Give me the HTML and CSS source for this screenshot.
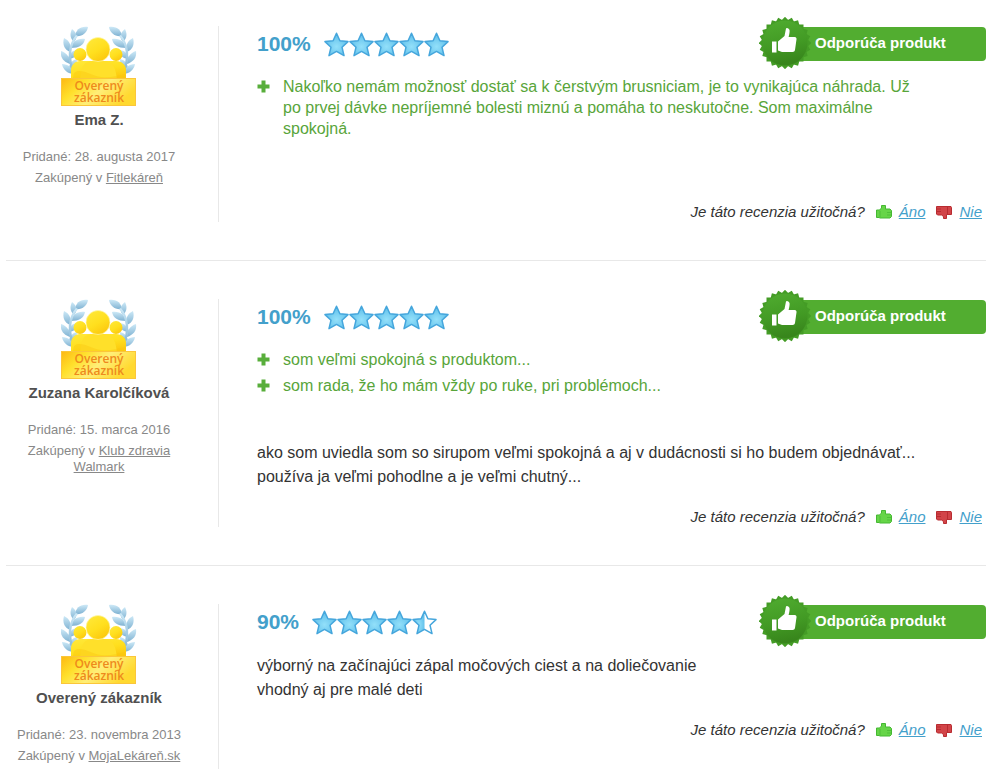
FILE: index.html
```html
<!DOCTYPE html>
<html lang="sk">
<head>
    <meta charset="UTF-8">
    <meta name="viewport" content="width=device-width, initial-scale=1.0">
    <title>Recenzie produktu</title>
    <link rel="stylesheet" href="styles.css">
</head>
<body>
    <!-- shared icons -->
    <svg class="sprite" aria-hidden="true">
        <defs>
            <linearGradient id="gold" x1="0" y1="0" x2="0.6" y2="1">
                <stop offset="0" stop-color="#ffe93c"/>
                <stop offset="0.6" stop-color="#ffdf1e"/>
                <stop offset="1" stop-color="#fcc90f"/>
            </linearGradient>
            <linearGradient id="plate" x1="0" y1="0" x2="1" y2="0.4">
                <stop offset="0" stop-color="#fdb813"/>
                <stop offset="0.3" stop-color="#ffe02c"/>
                <stop offset="0.6" stop-color="#ffee78"/>
                <stop offset="1" stop-color="#ffd930"/>
            </linearGradient>
            <linearGradient id="leaf" x1="0" y1="0" x2="0" y2="1">
                <stop offset="0" stop-color="#cde9f7"/>
                <stop offset="1" stop-color="#7fb2d2"/>
            </linearGradient>
            <radialGradient id="starFill" cx="0.5" cy="0.6" r="0.55">
                <stop offset="0" stop-color="#93e0fa"/>
                <stop offset="1" stop-color="#5fbfea"/>
            </radialGradient>
            <linearGradient id="sealFill" x1="0" y1="0" x2="0.2" y2="1">
                <stop offset="0" stop-color="#50ac30"/>
                <stop offset="0.6" stop-color="#429a24"/>
                <stop offset="1" stop-color="#38861c"/>
            </linearGradient>
        </defs>
        <symbol id="star" viewBox="0 0 25 25">
            <path d="M12.5 1.2 15.9 8.8 24 9.6 18 15.2 20 23.6 12.5 19.4 5 23.6 7 15.2 1 9.6 9.1 8.8Z" fill="url(#starFill)" stroke="#45a6dc" stroke-width="1.5" stroke-linejoin="round"/>
        </symbol>
        <symbol id="star-half" viewBox="0 0 25 25">
            <path d="M12.5 1.2 15.9 8.8 24 9.6 18 15.2 20 23.6 12.5 19.4 5 23.6 7 15.2 1 9.6 9.1 8.8Z" fill="#fff"/>
            <path d="M12.5 1.2V19.4L5 23.6 7 15.2 1 9.6 9.1 8.8Z" fill="url(#starFill)"/>
            <path d="M12.5 1.2 15.9 8.8 24 9.6 18 15.2 20 23.6 12.5 19.4 5 23.6 7 15.2 1 9.6 9.1 8.8Z" fill="none" stroke="#45a6dc" stroke-width="1.5" stroke-linejoin="round"/>
        </symbol>
        <symbol id="plus" viewBox="0 0 13 13">
            <path d="M4.5 0.5h4v4h4v4h-4v4h-4v-4h-4v-4h4z" fill="#58ae3b"/>
        </symbol>
        <symbol id="vote-up" viewBox="0 0 16 16">
            <path d="M0.5 6h3l2-2V1.500h4V5h4.500l1.500 1.500v6L14 14H4l-1-.5H0.500z" fill="#66d548" stroke="#45b832"/>
            <path d="M4 7v6M11 8.500h4M11 11h4" fill="none" stroke="#4fbf39"/>
        </symbol>
        <symbol id="vote-down" viewBox="0 0 16 16">
            <path d="M0.500 2.500H15l.5 1v7h-5v4h-3v-2L5.500 11h-4l-1-1z" fill="#d24448" stroke="#b82c31"/>
            <path d="M11.500 3v7M1 5h4M1 7.500h4" fill="none" stroke="#b82c31"/>
        </symbol>
        <symbol id="seal" viewBox="0 0 52 52">
            <g fill="#449c26">
                <rect x="7.500" y="7.500" width="37" height="37"/>
                <rect x="7.500" y="7.500" width="37" height="37" transform="rotate(15 26 26)"/>
                <rect x="7.500" y="7.500" width="37" height="37" transform="rotate(30 26 26)"/>
                <rect x="7.500" y="7.500" width="37" height="37" transform="rotate(45 26 26)"/>
                <rect x="7.500" y="7.500" width="37" height="37" transform="rotate(60 26 26)"/>
                <rect x="7.500" y="7.500" width="37" height="37" transform="rotate(75 26 26)"/>
            </g>
            <circle cx="26" cy="26" r="22.500" fill="url(#sealFill)"/>
            <path d="M13 24.500h4.500V35.500H13z" fill="#fff"/>
            <path d="M19 24.500 25.500 19 27 11.500c.3-1.200 3.400-.6 3.600 2 .1 2-.5 4.500-1 6.500h6c1.700 0 2.300 1.500 1.800 3L36 33c-.3 1.300-1 2-2.400 2H23l-4-1.500z" fill="#fff"/>
        </symbol>
        <symbol id="verified" viewBox="0 0 76 82">
            <g id="laurel" fill="url(#leaf)">
                <path d="M27 1c-8-1-12 3-13 9 7 1 12-3 13-9z"/>
                <path d="M11 3c-3 6-1 10 2 13 4-5 3-9-2-13z"/>
                <path d="M24 13c-8-1-13 3-14 9 8 0 13-3 14-9z"/>
                <path d="M3 12c-2 7 1 12 6 14 2-6 0-11-6-14z"/>
                <path d="M17 24c-6 0-9 4-10 9 6 0 10-4 10-9z"/>
                <path d="M0 25c-1 7 3 11 9 13 0-7-3-11-9-13z"/>
                <path d="M16 33c-5 1-8 5-8 10 6-1 8-5 8-10z"/>
                <path d="M1 38c1 6 6 10 12 10-1-6-6-10-12-10z"/>
                <path d="M15 9C7 18 5 32 12 48l2-1C8 33 9 19 17 10z"/>
            </g>
            <use href="#laurel" transform="matrix(-1 0 0 1 75 0)"/>
            <circle cx="19" cy="28.500" r="6.500" fill="url(#gold)"/>
            <circle cx="55" cy="28.500" r="6.500" fill="url(#gold)"/>
            <path d="M10 54V44c0-5 4-9 9-9h36c6 0 10 4 10 9v10z" fill="url(#gold)"/>
            <path d="M19 54c1-10 2-18 11-19h14c9 1 11 9 12 19z" fill="#ffe02a"/>
            <circle cx="37" cy="23.500" r="12" fill="url(#gold)" stroke="#fff6a8" stroke-width="0.700"/>
            <path d="M12 53c0-6 2-8 6-8 8 0 14 5 22 6 9 1 15-1 24-3v5z" fill="#fbc60e" opacity="0.400"/>
            <rect x="0.500" y="52.500" width="74" height="27" fill="url(#plate)" stroke="#fbc63a"/>
        </symbol>
    </svg>

    <main class="reviews">
        <article class="review">
            <div class="author">
                <div class="verified">
                    <svg><use href="#verified"/></svg>
                    <span>Overený<br>zákazník</span>
                </div>
                <h3>Ema Z.</h3>
                <p>Pridané: 28. augusta 2017</p>
                <p>Zakúpený v <a href="#">Fitlekáreň</a></p>
            </div>
            <div class="content">
                <div class="head">
                    <span class="percent">100%</span>
                    <span class="stars">
                        <svg><use href="#star"/></svg><svg><use href="#star"/></svg><svg><use href="#star"/></svg><svg><use href="#star"/></svg><svg><use href="#star"/></svg>
                    </span>
                    <div class="recommends">
                        <svg class="seal"><use href="#seal"/></svg>
                        Odporúča produkt
                    </div>
                </div>
                <ul class="pros">
                    <li><svg><use href="#plus"/></svg><span>Nakoľko nemám možnosť dostať sa k čerstvým brusniciam, je to vynikajúca náhrada. Už po prvej dávke nepríjemné bolesti miznú a pomáha to neskutočne. Som maximálne spokojná.</span></li>
                </ul>
                <div class="helpful">
                    <span>Je táto recenzia užitočná?</span>
                    <a href="#"><svg><use href="#vote-up"/></svg><span>Áno</span></a>
                    <a href="#"><svg><use href="#vote-down"/></svg><span>Nie</span></a>
                </div>
            </div>
        </article>

        <article class="review">
            <div class="author">
                <div class="verified">
                    <svg><use href="#verified"/></svg>
                    <span>Overený<br>zákazník</span>
                </div>
                <h3>Zuzana Karolčíková</h3>
                <p>Pridané: 15. marca 2016</p>
                <p>Zakúpený v <a href="#">Klub zdravia Walmark</a></p>
            </div>
            <div class="content">
                <div class="head">
                    <span class="percent">100%</span>
                    <span class="stars">
                        <svg><use href="#star"/></svg><svg><use href="#star"/></svg><svg><use href="#star"/></svg><svg><use href="#star"/></svg><svg><use href="#star"/></svg>
                    </span>
                    <div class="recommends">
                        <svg class="seal"><use href="#seal"/></svg>
                        Odporúča produkt
                    </div>
                </div>
                <ul class="pros">
                    <li><svg><use href="#plus"/></svg><span>som veľmi spokojná s produktom...</span></li>
                    <li><svg><use href="#plus"/></svg><span>som rada, že ho mám vždy po ruke, pri problémoch...</span></li>
                </ul>
                <p class="text">ako som uviedla som so sirupom veľmi spokojná a aj v dudácnosti si ho budem objednávať...<br>používa ja veľmi pohodlne a je veľmi chutný...</p>
                <div class="helpful">
                    <span>Je táto recenzia užitočná?</span>
                    <a href="#"><svg><use href="#vote-up"/></svg><span>Áno</span></a>
                    <a href="#"><svg><use href="#vote-down"/></svg><span>Nie</span></a>
                </div>
            </div>
        </article>

        <article class="review">
            <div class="author">
                <div class="verified">
                    <svg><use href="#verified"/></svg>
                    <span>Overený<br>zákazník</span>
                </div>
                <h3>Overený zákazník</h3>
                <p>Pridané: 23. novembra 2013</p>
                <p>Zakúpený v <a href="#">MojaLekáreň.sk</a></p>
            </div>
            <div class="content">
                <div class="head">
                    <span class="percent">90%</span>
                    <span class="stars">
                        <svg><use href="#star"/></svg><svg><use href="#star"/></svg><svg><use href="#star"/></svg><svg><use href="#star"/></svg><svg><use href="#star-half"/></svg>
                    </span>
                    <div class="recommends">
                        <svg class="seal"><use href="#seal"/></svg>
                        Odporúča produkt
                    </div>
                </div>
                <p class="text">výborný na začínajúci zápal močových ciest a na doliečovanie<br>vhodný aj pre malé deti</p>
                <div class="helpful">
                    <span>Je táto recenzia užitočná?</span>
                    <a href="#"><svg><use href="#vote-up"/></svg><span>Áno</span></a>
                    <a href="#"><svg><use href="#vote-down"/></svg><span>Nie</span></a>
                </div>
            </div>
        </article>
    </main>
</body>
</html>
```
FILE: styles.css
```css
* {
    box-sizing: border-box;
}
body {
    margin: 0;
    background: #fff;
    color: #333;
    font-family: "Liberation Sans", Arial, sans-serif;
    font-size: 16px;
}
h3, p, ul {
    margin: 0;
    padding: 0;
}
.sprite {
    position: absolute;
    width: 0;
    height: 0;
}
.reviews {
    padding: 26px 18px 0 6px;
}
.review {
    display: flex;
    padding-bottom: 38px;
    margin-bottom: 38px;
    border-bottom: 1px solid #e8e8e8;
}
.review:last-child {
    padding-bottom: 0;
    margin-bottom: 0;
    border-bottom: none;
}

/* left column */
.author {
    flex: none;
    width: 213px;
    padding-right: 26px;
    border-right: 1px solid #e8e8e8;
    text-align: center;
    color: #888;
    font-size: 13px;
    line-height: 16px;
}
.author h3 {
    margin: 3px 0 20px;
    color: #505050;
    font-size: 15px;
    line-height: 18px;
}
.author p {
    margin-bottom: 5px;
}
.author p:last-child {
    padding: 0 10px;
}
.author a {
    color: #888;
}
.verified {
    position: relative;
    width: 76px;
    height: 82px;
    margin: 0 auto;
}
.verified svg {
    display: block;
    width: 76px;
    height: 82px;
}
.verified span {
    position: absolute;
    left: 0;
    right: 0;
    bottom: 4px;
    color: #ee8a1c;
    font-family: "Open Sans", "Noto Sans", sans-serif;
    font-size: 12px;
    font-weight: 600;
    line-height: 12px;
}

/* right column */
.content {
    flex: 1;
    padding-left: 38px;
}
.head {
    display: flex;
    align-items: center;
    height: 36px;
    margin-bottom: 14px;
}
.percent {
    margin-right: 13px;
    color: #43a0cb;
    font-size: 21px;
    font-weight: bold;
}
.stars {
    display: flex;
}
.stars svg {
    width: 25px;
    height: 25px;
}
.recommends {
    position: relative;
    width: 204px;
    height: 34px;
    margin-left: auto;
    padding-left: 33px;
    border-radius: 4px;
    background: #52ad30;
    color: #fff;
    font-size: 15px;
    font-weight: bold;
    line-height: 32px;
}
.seal {
    position: absolute;
    left: -23px;
    top: -10px;
    width: 52px;
    height: 52px;
}
.pros {
    list-style: none;
    padding: 0 60px 35px 0;
    color: #58a53a;
    line-height: 21px;
}
.pros li {
    display: flex;
    gap: 13px;
    margin-bottom: 5px;
}
.pros svg {
    flex: none;
    width: 13px;
    height: 13px;
    margin-top: 4px;
}
.pros + .text {
    margin-top: 5px;
}
.pros + .helpful {
    margin-top: 23px;
}
.text {
    line-height: 24px;
}
.helpful {
    display: flex;
    justify-content: flex-end;
    gap: 11px;
    margin-top: 18px;
    padding-right: 4px;
    font-size: 15px;
    font-style: italic;
    line-height: 20px;
}
.helpful a {
    display: flex;
    align-items: center;
    gap: 7px;
    color: #43a0cb;
    text-decoration: none;
}
.helpful a span {
    text-decoration: underline;
}
.helpful svg {
    width: 16px;
    height: 16px;
}
```
